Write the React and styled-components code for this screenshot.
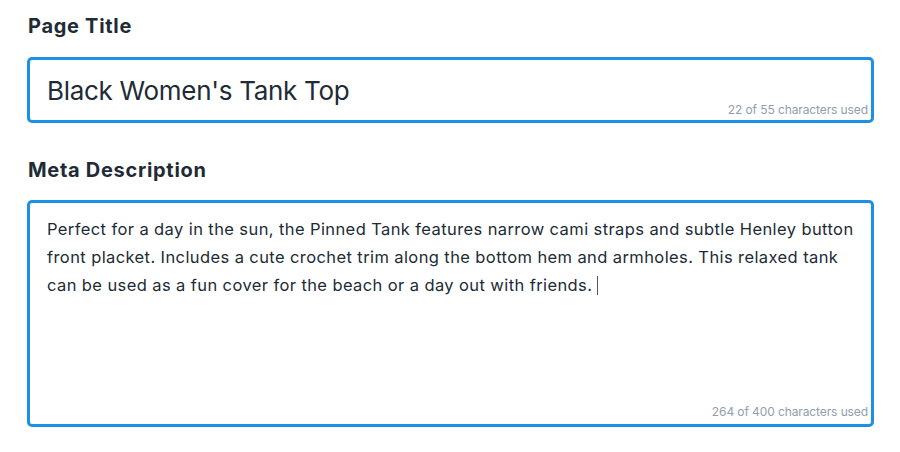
import styled, { createGlobalStyle } from 'styled-components';

const Global = createGlobalStyle`
    body {
        margin: 0;
        background: #ffffff;
        font-family: Inter, "Liberation Sans", Arial, sans-serif;
        color: #212b36;
    }
`

const Page = styled.div`
    width: 900px;
    height: 452px;
    box-sizing: border-box;
    padding: 13px 26px 0 27px;
    display: flex;
    flex-direction: column;
`

const Label = styled.h2`
    margin: 0 0 ${p => p.gap}px 1px;
    font-size: 20px;
    line-height: 26px;
    font-weight: 700;
    letter-spacing: 0.7px;
    color: #212b36;
`

const Box = styled.div`
    box-sizing: border-box;
    height: ${p => p.h}px;
    border: 3px solid #1c8fe6;
    border-radius: 5px;
    padding: ${p => p.pad};
    display: flex;
    flex-direction: column;
    margin-bottom: ${p => p.mb}px;
`

const TitleText = styled.div`
    font-size: 26px;
    line-height: 24px;
    letter-spacing: -0.3px;
    color: #212b36;
`

const BodyText = styled.div`
    padding-right: 6px;
    font-size: 16.5px;
    line-height: 28px;
    letter-spacing: 0.4px;
    color: #212b36;
`

const Caret = styled.span`
    display: inline-block;
    width: 1px;
    height: 19px;
    margin-left: 5px;
    background: #555;
    vertical-align: -4px;
`

const Counter = styled.div`
    margin-top: auto;
    margin-bottom: ${p => p.mb}px;
    align-self: flex-end;
    font-size: 12px;
    line-height: 12px;
    letter-spacing: -0.1px;
    color: #919eab;
`

function App() {
    return (
        <Page>
            <Global />
            <Label gap={18}>Page Title</Label>
            <Box h={66} pad={'19px 3px 0 17px'} mb={34}>
                <TitleText>Black Women's Tank Top</TitleText>
                <Counter mb={4}>22 of 55 characters used</Counter>
            </Box>
            <Label gap={17}>Meta Description</Label>
            <Box h={227} pad={'12px 3px 4px 17px'} mb={0}>
                <BodyText>
                    Perfect for a day in the sun, the Pinned Tank features narrow cami straps and subtle Henley button front placket. Includes a cute crochet trim along the bottom hem and armholes. This relaxed tank can be used as a fun cover for the beach or a day out with friends.<Caret />
                </BodyText>
                <Counter mb={2}>264 of 400 characters used</Counter>
            </Box>
        </Page>
    )
}

export default App;
